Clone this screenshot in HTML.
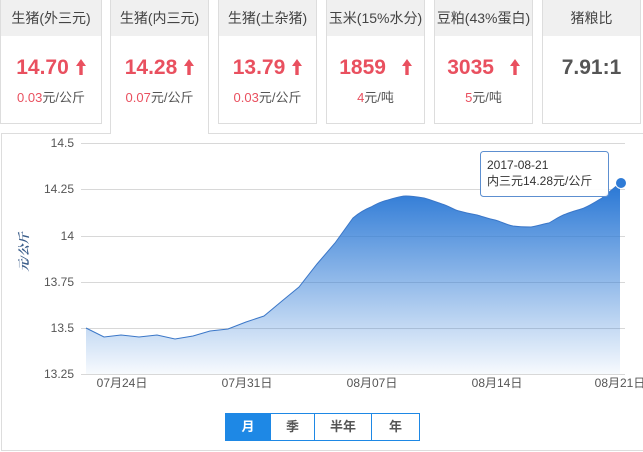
<!DOCTYPE html>
<html><head><meta charset="utf-8"><style>
*{margin:0;padding:0;box-sizing:border-box}
body{width:643px;height:452px;background:#fff;position:relative;overflow:hidden;font-family:"Liberation Sans","Noto Sans CJK SC",sans-serif}
.card{position:absolute;top:0;width:100px;height:124px;border:1px solid #ddd;border-top:none;background:#fff}
.card .h{height:36px;background:#f0f0f0;font-size:14px;color:#444;text-align:center;line-height:36px}
.card .v{font-size:21px;font-weight:bold;color:#e9505f;text-align:center;margin-top:20px;height:24px;line-height:24px}
.card .v svg{margin-left:7px;vertical-align:-1px}
.card .s{font-size:13px;color:#555;text-align:center;margin-top:7px}
.card .s b{font-weight:normal;color:#e9505f}
.panel{position:absolute;left:1px;top:133px;width:650px;height:318px;border:1px solid #ddd}
.btns{position:absolute;left:225px;top:413px;height:28px;display:flex;border:1px solid #1e88e5}
.btns div{font-size:13px;font-weight:bold;color:#555;text-align:center;line-height:26px;border-left:1px solid #1e88e5}
</style></head><body>
<div class="panel"></div>
<div class="card" style="left:0;width:102px"><div class="h">生猪(外三元)</div><div class="v">14.70<svg width="10" height="16" viewBox="0 0 10 16"><path d="M5 0L10 7H6.7V16H3.3V7H0Z" fill="#e9505f"/></svg></div><div class="s"><b>0.03</b>元/公斤</div></div>
<div class="card" style="left:110px;width:99px;height:134px;border-bottom:none;z-index:2"><div class="h">生猪(内三元)</div><div class="v">14.28<svg width="10" height="16" viewBox="0 0 10 16"><path d="M5 0L10 7H6.7V16H3.3V7H0Z" fill="#e9505f"/></svg></div><div class="s"><b>0.07</b>元/公斤</div></div>
<div class="card" style="left:218px;width:99px"><div class="h">生猪(土杂猪)</div><div class="v">13.79<svg width="10" height="16" viewBox="0 0 10 16"><path d="M5 0L10 7H6.7V16H3.3V7H0Z" fill="#e9505f"/></svg></div><div class="s"><b>0.03</b>元/公斤</div></div>
<div class="card" style="left:326px;width:99px"><div class="h">玉米(15%水分)</div><div class="v">1859 <svg width="10" height="16" viewBox="0 0 10 16" style="margin-left:10px"><path d="M5 0L10 7H6.7V16H3.3V7H0Z" fill="#e9505f"/></svg></div><div class="s"><b>4</b>元/吨</div></div>
<div class="card" style="left:434px;width:99px"><div class="h">豆粕(43%蛋白)</div><div class="v">3035 <svg width="10" height="16" viewBox="0 0 10 16" style="margin-left:10px"><path d="M5 0L10 7H6.7V16H3.3V7H0Z" fill="#e9505f"/></svg></div><div class="s"><b>5</b>元/吨</div></div>
<div class="card" style="left:542px;width:99px"><div class="h">猪粮比</div><div class="v" style="color:#555">7.91:1</div></div>
<svg style="position:absolute;left:0;top:0" width="643" height="452">
<defs><linearGradient id="g" gradientUnits="userSpaceOnUse" x1="0" y1="190" x2="0" y2="374"><stop offset="0" stop-color="#2f7bd6"/><stop offset="1" stop-color="#2f7bd6" stop-opacity="0.04"/></linearGradient></defs>
<g stroke="#d8d8d8" stroke-width="1">
<line x1="81" y1="143.5" x2="625" y2="143.5"/><line x1="81" y1="189.5" x2="625" y2="189.5"/><line x1="81" y1="236.5" x2="625" y2="236.5"/><line x1="81" y1="282.5" x2="625" y2="282.5"/><line x1="81" y1="328.5" x2="625" y2="328.5"/><line x1="81" y1="374.5" x2="625" y2="374.5"/>
</g>
<g font-size="12" fill="#555" text-anchor="end" font-family="Liberation Sans,sans-serif">
<text x="74" y="147">14.5</text><text x="74" y="193">14.25</text><text x="74" y="240">14</text><text x="74" y="286">13.75</text><text x="74" y="332">13.5</text><text x="74" y="378">13.25</text>
</g>
<text transform="translate(28,252) rotate(-90)" text-anchor="middle" font-size="12" fill="#3a5d8a" font-family="Liberation Serif,Noto Serif CJK SC,serif" font-style="italic" font-weight="bold">元/公斤</text>
<path id="ln" d="M86,328 L104,337 121,335 139,337 157,335 175,339 193,336 210,331 228,329 246,322 264,316 282,301 299,287 317,264 335,243 353,218 C360,212 366,209 371,207 C378,203 383,201 388,200 C395,198 400,196 406,196 C412,196 418,197 424,198 C431,200 436,202 442,204 C449,206 454,210 459,211 C466,213 471,214 477,215 C484,217 489,219 495,220 C502,222 507,225 513,226 C520,227 526,227 531,227 C538,226 543,224 549,223 C556,219 560,216 566,214 C573,211 579,210 584,208 C591,205 597,201 602,198 L620,183 L620,374 L86,374 Z" fill="url(#g)" stroke="none"/>
<path d="M86,328 L104,337 121,335 139,337 157,335 175,339 193,336 210,331 228,329 246,322 264,316 282,301 299,287 317,264 335,243 353,218 C360,212 366,209 371,207 C378,203 383,201 388,200 C395,198 400,196 406,196 C412,196 418,197 424,198 C431,200 436,202 442,204 C449,206 454,210 459,211 C466,213 471,214 477,215 C484,217 489,219 495,220 C502,222 507,225 513,226 C520,227 526,227 531,227 C538,226 543,224 549,223 C556,219 560,216 566,214 C573,211 579,210 584,208 C591,205 597,201 602,198 L620,183" fill="none" stroke="#3b77c8" stroke-width="1"/>
<circle cx="621" cy="183" r="5.5" fill="#2f7bd6" stroke="#fff" stroke-width="1"/>
<rect x="480.5" y="151.5" width="128" height="45" rx="3" fill="#fff" fill-opacity="0.95" stroke="#5d8fd0"/>
<text x="487" y="169" font-size="12" fill="#333" font-family="Liberation Sans,sans-serif">2017-08-21</text>
<text x="487" y="185" font-size="12" fill="#333" font-family="Liberation Sans,Noto Sans CJK SC,sans-serif">内三元14.28元/公斤</text>
<g font-size="12" fill="#555" text-anchor="middle" font-family="Liberation Sans,Noto Sans CJK SC,sans-serif">
<text x="122" y="387">07月24日</text><text x="247" y="387">07月31日</text><text x="372" y="387">08月07日</text><text x="497" y="387">08月14日</text><text x="620" y="387">08月21日</text>
</g>
</svg>
<div class="btns">
<div style="width:44px;background:#1e88e5;color:#fff;border-left:none">月</div>
<div style="width:44px">季</div>
<div style="width:57px">半年</div>
<div style="width:48px">年</div>
</div>
</body></html>
